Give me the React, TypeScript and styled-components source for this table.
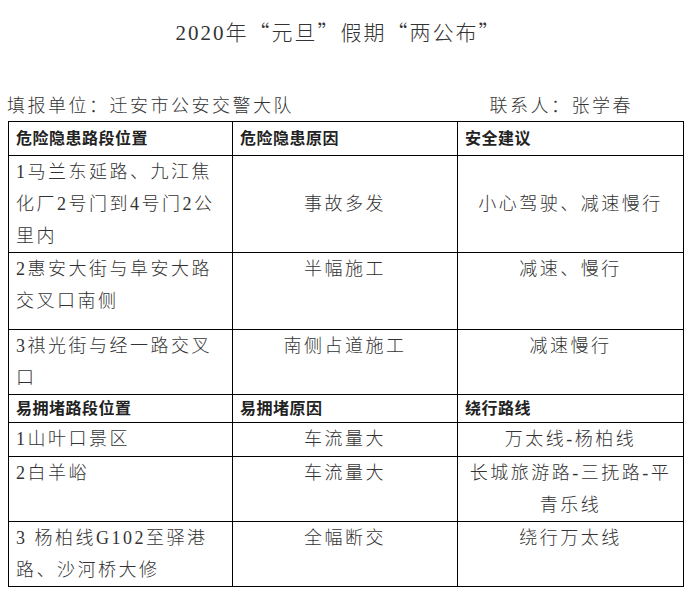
import React from "react";
import styled, { createGlobalStyle } from "styled-components";

const GlobalStyle = createGlobalStyle`
  html, body {
    margin: 0;
    padding: 0;
    background: #ffffff;
  }
  body {
    font-family: "Liberation Serif", "Noto Sans CJK SC", serif;
    color: #333333;
  }
`;

const Page = styled.div`
  width: 689px;
  height: 592px;
  padding: 17px 6px 0 8px;
  box-sizing: border-box;
`;

const Title = styled.h1`
  margin: 0;
  padding-right: 14px;
  font-size: 21px;
  font-weight: 300;
  line-height: 28px;
  letter-spacing: 2px;
  text-align: center;
  color: #333333;
`;

// full-width CJK quotation marks
const Quote = styled.span`
  font-family: "Noto Sans CJK SC", sans-serif;
`;

const InfoLine = styled.div`
  display: flex;
  justify-content: space-between;
  margin: 47px 0 3px -1px;
  padding-right: 50px;
  font-size: 18px;
  font-weight: 300;
  line-height: 24px;
  letter-spacing: 2.5px;
`;

const Table = styled.table`
  width: 676px;
  border-collapse: collapse;
  table-layout: fixed;
`;

const Row = styled.tr<{ $h: number }>`
  height: ${(p) => p.$h}px;
`;

const HeadCell = styled.th`
  border: 1px solid #000000;
  padding: 0 7px;
  font-size: 16px;
  font-weight: 700;
  letter-spacing: 0.5px;
  line-height: 24px;
  text-align: left;
  vertical-align: middle;
  color: #222222;
`;

const Cell = styled.td<{ $center?: boolean; $middle?: boolean }>`
  border: 1px solid #000000;
  padding: 0 7px;
  font-size: 18px;
  font-weight: 300;
  letter-spacing: 2.5px;
  line-height: 32px;
  text-align: ${(p) => (p.$center ? "center" : "left")};
  vertical-align: ${(p) => (p.$middle ? "middle" : "top")};
  white-space: nowrap;
`;

interface RowData {
  h: number;
  place: React.ReactNode;
  reason: string;
  advice: React.ReactNode;
  middle?: boolean;
}

const dangerRows: RowData[] = [
  {
    h: 97,
    place: (
      <>
        1马兰东延路、九江焦
        <br />
        化厂2号门到4号门2公
        <br />
        里内
      </>
    ),
    reason: "事故多发",
    advice: "小心驾驶、减速慢行",
    middle: true,
  },
  {
    h: 77,
    place: (
      <>
        2惠安大街与阜安大路
        <br />
        交叉口南侧
      </>
    ),
    reason: "半幅施工",
    advice: "减速、慢行",
  },
  {
    h: 65,
    place: (
      <>
        3祺光街与经一路交叉
        <br />口
      </>
    ),
    reason: "南侧占道施工",
    advice: "减速慢行",
  },
];

const jamRows: RowData[] = [
  { h: 34, place: "1山叶口景区", reason: "车流量大", advice: "万太线-杨柏线" },
  {
    h: 65,
    place: "2白羊峪",
    reason: "车流量大",
    advice: (
      <>
        长城旅游路-三抚路-平
        <br />
        青乐线
      </>
    ),
  },
  {
    h: 64,
    place: (
      <>
        3 杨柏线G102至驿港
        <br />
        路、沙河桥大修
      </>
    ),
    reason: "全幅断交",
    advice: "绕行万太线",
  },
];

const renderRows = (rows: RowData[]) =>
  rows.map((r, i) => (
    <Row key={i} $h={r.h}>
      <Cell>{r.place}</Cell>
      <Cell $center $middle={r.middle}>
        {r.reason}
      </Cell>
      <Cell $center $middle={r.middle}>
        {r.advice}
      </Cell>
    </Row>
  ));

export default function App() {
  return (
    <>
      <GlobalStyle />
      <Page>
        <Title>
          2020年<Quote>“</Quote>元旦<Quote>”</Quote>假期<Quote>“</Quote>两公布
          <Quote>”</Quote>
        </Title>
        <InfoLine>
          <span>填报单位：迁安市公安交警大队</span>
          <span>联系人：张学春</span>
        </InfoLine>
        <Table>
          <colgroup>
            <col style={{ width: 224 }} />
            <col style={{ width: 225 }} />
            <col style={{ width: 226 }} />
          </colgroup>
          <tbody>
            <Row $h={34}>
              <HeadCell>危险隐患路段位置</HeadCell>
              <HeadCell>危险隐患原因</HeadCell>
              <HeadCell>安全建议</HeadCell>
            </Row>
            {renderRows(dangerRows)}
            <Row $h={28}>
              <HeadCell>易拥堵路段位置</HeadCell>
              <HeadCell>易拥堵原因</HeadCell>
              <HeadCell>绕行路线</HeadCell>
            </Row>
            {renderRows(jamRows)}
          </tbody>
        </Table>
      </Page>
    </>
  );
}
